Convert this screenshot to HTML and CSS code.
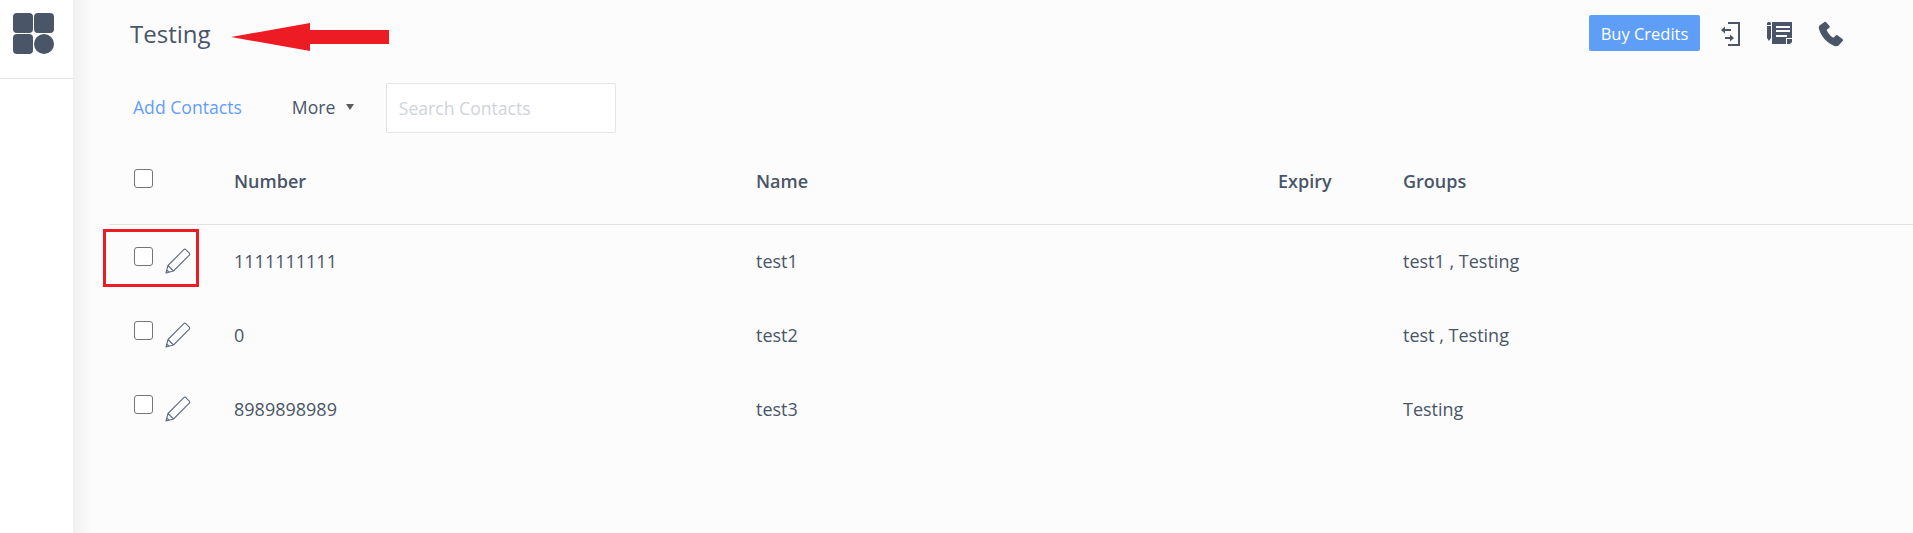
FILE: index.html
```html
<!DOCTYPE html>
<html lang="en">
<head>
    <meta charset="UTF-8">
    <title>Contacts</title>
    <link rel="stylesheet" href="styles.css">
</head>
<body>
    <div class="page">
        <aside class="sidebar">
            <div class="logo-box">
                <div class="logo">
                    <span class="logo-cell"></span>
                    <span class="logo-cell"></span>
                    <span class="logo-cell"></span>
                    <span class="logo-cell logo-round"></span>
                </div>
            </div>
        </aside>

        <main class="main">
            <header class="topbar">
                <h1 class="title">Testing</h1>
                <div class="top-actions">
                    <button class="buy-btn">Buy Credits</button>
                    <svg class="top-icon icon-switch" viewBox="0 0 22 26" width="22" height="26">
                        <path d="M8 2h11v22H8" fill="none" stroke="#4a5568" stroke-width="2"/>
                        <path d="M1 9l4-3.500V8h6v2H5v2.500z" fill="#4a5568"/>
                        <path d="M14 17l-4 3.500V18H5v-2h5v-2.500z" fill="#4a5568"/>
                    </svg>
                    <svg class="top-icon icon-notes" viewBox="0 0 26 26" width="26" height="26">
                        <path d="M0 2.500C0 1.500.8 1 2 1s2 .5 2 1.500V4H0zM0 5h4v12l-2 3-2-3z" fill="#4a5568"/>
                        <path fill-rule="evenodd" d="M5 1h20v16h-6v6H5zM9 5v2h14V5zM9 9v2h14V9zM9 14v2h11v-2z" fill="#4a5568"/>
                        <path d="M25 18v3l-2 2h-3v-5z" fill="#4a5568"/>
                    </svg>
                    <svg class="top-icon icon-phone" viewBox="0 0 26 26" width="26" height="26">
                        <path d="M6.500 1 1.800 4.200C.8 5 .6 6.500 1 8c2 7.500 8.500 14.500 15.500 17 1.800.6 3.300.3 4.300-.8l3.900-4.200c.5-.6.4-1.400-.2-1.900l-4.800-3.700c-.6-.4-1.300-.4-1.800.1l-2.400 2.300c-3-1.600-5.700-4.700-6.900-7.900l2.600-2.100c.6-.5.700-1.200.3-1.800L8.400 1.400C7.900.7 7.100.6 6.500 1z" fill="#4a5568"/>
                    </svg>
                </div>
            </header>

            <div class="toolbar">
                <a class="add-link" href="#">Add Contacts</a>
                <div class="more">More <span class="caret"></span></div>
                <input class="search" type="text" placeholder="Search Contacts">
            </div>

            <div class="table">
                <div class="row head-row">
                    <div class="check-cell"><span class="checkbox"></span></div>
                    <div>Number</div>
                    <div>Name</div>
                    <div>Expiry</div>
                    <div>Groups</div>
                </div>

                <div class="row">
                    <div class="check-cell">
                        <span class="checkbox"></span>
                        <svg class="pencil" viewBox="0 0 26 26" width="26" height="26"><use href="#pencil"/></svg>
                    </div>
                    <div>1111111111</div>
                    <div>test1</div>
                    <div></div>
                    <div>test1 , Testing</div>
                </div>

                <div class="row">
                    <div class="check-cell">
                        <span class="checkbox"></span>
                        <svg class="pencil" viewBox="0 0 26 26" width="26" height="26"><use href="#pencil"/></svg>
                    </div>
                    <div>0</div>
                    <div>test2</div>
                    <div></div>
                    <div>test , Testing</div>
                </div>

                <div class="row">
                    <div class="check-cell">
                        <span class="checkbox"></span>
                        <svg class="pencil" viewBox="0 0 26 26" width="26" height="26"><use href="#pencil"/></svg>
                    </div>
                    <div>8989898989</div>
                    <div>test3</div>
                    <div></div>
                    <div>Testing</div>
                </div>
            </div>
        </main>
    </div>

    <!-- annotations drawn on top of the screenshot -->
    <svg class="note-arrow" viewBox="0 0 158 28" width="158" height="28">
        <path d="M0 14 79 0V7h79v14H79v7z" fill="#ed1c24"/>
    </svg>
    <div class="note-box"></div>

    <svg class="defs" width="0" height="0">
        <symbol id="pencil" viewBox="0 0 26 26">
            <path d="M1 25 3 17.500 18.800 1.700c.6-.6 1.400-.6 2 0l3.500 3.500c.6.6.6 1.400 0 2L8.500 23zM3 17.500 8.500 23M1 25l3-.8-2.200-2.200z" fill="none" stroke="#5f6c80" stroke-width="1.100" stroke-linejoin="round"/>
        </symbol>
    </svg>
</body>
</html>
```

FILE: styles.css
```css
* {
    box-sizing: border-box;
}

body {
    margin: 0;
    height: 533px;
    overflow: hidden;
    font-family: "Open Sans", sans-serif;
    font-size: 18px;
    color: #4a5568;
    background-color: #fcfcfc;
}

.page {
    display: flex;
    height: 533px;
}

.sidebar {
    flex: 0 0 73px;
    background-color: #ffffff;
}

.logo-box {
    height: 79px;
    padding: 13px 13px 0;
    border-bottom: 1px solid #e3e3e3;
}

.logo {
    display: grid;
    grid-template-columns: 20px 20px;
    grid-template-rows: 20px 20px;
    gap: 1px;
}

.logo-cell {
    background-color: #4a5568;
    border-radius: 4px;
}

.logo-round {
    border-radius: 50%;
}

.main {
    flex: 1;
    min-width: 0;
    background-image: linear-gradient(to right, #f0f0f0, #fcfcfc 18px);
}

.topbar {
    display: flex;
    justify-content: space-between;
    align-items: center;
    height: 68px;
    padding-left: 57px;
}

.title {
    margin: 0;
    font-size: 24px;
    font-weight: 400;
    line-height: 30px;
}

.top-actions {
    display: flex;
    align-items: center;
    margin-right: 69px;
}

.buy-btn {
    width: 111px;
    height: 36px;
    margin-bottom: 2px;
    padding: 0;
    border: none;
    border-radius: 2px;
    background-color: #5f9ef6;
    color: #ffffff;
    font-family: inherit;
    font-size: 16.500px;
}

.top-icon {
    display: block;
}

.icon-switch {
    margin-left: 20px;
}

.icon-notes {
    margin-left: 25px;
}

.icon-phone {
    margin-left: 25px;
}

.toolbar {
    display: flex;
    align-items: center;
    height: 49px;
    margin-top: 15px;
    padding-left: 60px;
}

.add-link {
    margin-bottom: 2px;
    font-size: 17.600px;
    color: #639dfc;
    text-decoration: none;
}

.more {
    display: flex;
    align-items: center;
    width: 64px;
    margin-bottom: 2px;
    margin-left: 50px;
    font-size: 17.600px;
}

.caret {
    width: 0;
    height: 0;
    margin-left: 11px;
    border-left: 4.500px solid transparent;
    border-right: 4.500px solid transparent;
    border-top: 6px solid #5b5b5b;
}

.search {
    width: 230px;
    height: 50px;
    margin-left: 30px;
    padding: 0 12px;
    border: 1px solid #e3e5e8;
    border-radius: 2px;
    background-color: #ffffff;
    font-family: inherit;
    font-size: 17.600px;
}

.search::placeholder {
    color: #cfd3da;
}

.table {
    padding-left: 36px;
}

.row {
    display: grid;
    grid-template-columns: 125px 522px 522px 125px 1fr;
    align-items: center;
    height: 74px;
    padding-bottom: 2px;
}

.head-row {
    height: 93px;
    padding-top: 6px;
    padding-bottom: 0;
    border-bottom: 1px solid #e3e3e3;
    font-weight: 600;
}

.check-cell {
    display: flex;
    align-items: flex-start;
    align-self: start;
    padding-top: 22px;
    padding-left: 25px;
}

.head-row .check-cell {
    padding-top: 31px;
}

.checkbox {
    display: block;
    width: 19px;
    height: 19px;
    border: 1px solid #757575;
    border-radius: 3px;
    background-color: #ffffff;
}

.pencil {
    display: block;
    margin-left: 12px;
    margin-top: 1px;
}

.defs {
    position: absolute;
}

.note-arrow {
    position: absolute;
    left: 231px;
    top: 23px;
}

.note-box {
    position: absolute;
    left: 103px;
    top: 229px;
    width: 96px;
    height: 58px;
    border: 3px solid #ed1c24;
}
```
